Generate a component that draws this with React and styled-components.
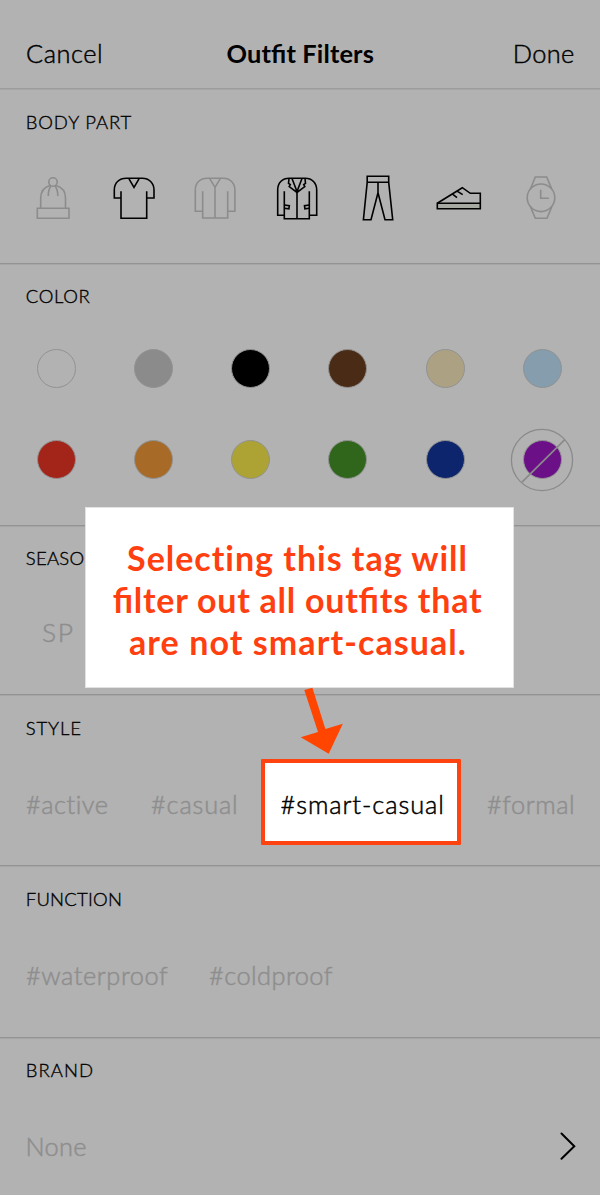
import React from "react";
import styled, { createGlobalStyle } from "styled-components";

const GlobalStyle = createGlobalStyle`
  * { box-sizing: border-box; }
  body {
    margin: 0;
    background: #b2b2b2;
    color: #000;
    font-family: Lato, "Open Sans", sans-serif;
    font-weight: 300;
    font-feature-settings: "liga" 1;
  }
`;

const Screen = styled.main`
  position: relative;
  width: 600px;
  height: 1195px;
  overflow: hidden;
  background: #b2b2b2;
`;

const Header = styled.header`
  display: grid;
  grid-template-columns: 1fr auto 1fr;
  align-items: center;
  height: 88px;
  padding: 18px 25.5px 0 26px;
`;

const HeaderAction = styled.button`
  justify-self: ${(p) => (p.$end ? "end" : "start")};
  padding: 0;
  border: 0;
  background: none;
  color: inherit;
  font: inherit;
  font-size: 25.4px;
  line-height: 32px;
  letter-spacing: ${(p) => (p.$end ? 0.3 : 0.5)}px;
  -webkit-text-stroke: 0.45px currentColor;
`;

const Title = styled.h1`
  margin: 0;
  font-size: 25.4px;
  line-height: 32px;
  font-weight: 700;
  letter-spacing: 0.15px;
`;

const Section = styled.section`
  height: ${(p) => p.$height}px;
  padding-top: ${(p) => p.$top || 20}px;
  border-top: 1px solid ${(p) => p.$line || "#939393"};
  box-shadow: inset 0 1px #a6a6a6;
`;

const Heading = styled.h2`
  margin: 0 0 0 25.7px;
  font-size: 18.5px;
  font-weight: 300;
  line-height: 24px;
  letter-spacing: ${(p) => p.$track}px;
  -webkit-text-stroke: 0.35px currentColor;
`;

const IconRow = styled.div`
  display: grid;
  grid-template-columns: repeat(7, 1fr);
  justify-items: center;
  margin-top: 37px;
  padding: 0 18.8px 0 12px;
`;

const Icon = styled.svg`
  width: 54px;
  height: 54px;
  fill: none;
  stroke: ${(p) => (p.$on ? "#000" : "#8c8c8c")};
  stroke-width: 1.6;
`;

const Swatches = styled.div`
  display: grid;
  grid-template-columns: repeat(6, 1fr);
  grid-auto-rows: 91px;
  place-items: center;
  margin-top: 15px;
  padding: 0 9.4px 0 8.2px;
`;

const SwatchCell = styled.div`
  position: relative;
  display: grid;
  place-items: center;
  width: 64px;
  height: 64px;
`;

const Swatch = styled.span`
  width: 39px;
  height: 39px;
  border: 1px solid #929292;
  border-radius: 50%;
  background: ${(p) => p.$color};
`;

const Excluded = styled.svg`
  position: absolute;
  inset: 0;
  fill: none;
  stroke: #8a8a8a;
`;

const TagRow = styled.div`
  display: grid;
  grid-template-columns: ${(p) => p.$columns};
  align-items: center;
  height: 86px;
  margin-top: ${(p) => p.$gap}px;
  padding: 0 24px 0 ${(p) => p.$left || 26}px;
`;

const Tag = styled.span`
  color: #8e8e8e;
  font-size: ${(p) => p.$size || 25.4}px;
  line-height: 32px;
  white-space: nowrap;
  letter-spacing: ${(p) => p.$track}px;
  margin-left: ${(p) => p.$indent || 0}px;
  padding-top: ${(p) => p.$drop || 0}px;
  font-feature-settings: "liga" 0;
  -webkit-text-stroke: 0.5px currentColor;
`;

const SelectedTag = styled(Tag)`
  display: flex;
  align-items: center;
  width: 200px;
  height: 86px;
  padding-left: 15.5px;
  border: 4px solid #ff4310;
  border-radius: 1px;
  background: #fff;
  color: #000;
`;

const Chevron = styled.svg`
  width: 16px;
  height: 28px;
  fill: none;
  stroke: #000;
  stroke-width: 2;
  stroke-linecap: round;
`;

const Callout = styled.aside`
  position: absolute;
  left: 85px;
  top: 507px;
  width: 429px;
  height: 181px;
  padding-top: 29px;
  border: 1px solid #e2e2e2;
  background: #fff;
  color: #ff3f10;
  text-align: center;
`;

const CalloutLine = styled.div`
  font-size: 34px;
  font-weight: 700;
  line-height: 42px;
  white-space: nowrap;
  letter-spacing: ${(p) => p.$track}px;
  padding-right: ${(p) => p.$shift || 0}px;
  font-feature-settings: "liga" ${(p) => (p.$plain ? 0 : 1)};
`;

const Arrow = styled.svg`
  position: absolute;
  left: 298px;
  top: 686px;
  fill: #ff4500;
`;

const bodyParts = [
  {
    name: "Hat",
    art: (
      <>
        <circle cx="27" cy="11" r="4.2" />
        <path d="M11.3 37.3H43V47.3H11.3ZM14.7 37.3V27C14.7 20 18.5 16 23.8 14.4M39.5 37.3V27C39.5 20 35.5 16 30.2 14.4M25 15C22.8 17.5 22.3 21 22.3 25M29 15C31.2 17.5 31.8 21 31.8 25" />
      </>
    ),
  },
  {
    name: "Top",
    on: true,
    art: <path d="M14 27H7.3V19C7.3 12 12 7.3 19.3 7.3H35.3C42 7.3 47 12 47 19V27H39.7M14 20.3V47.3H39.7V20.3M22 7.8L27 16.5L32 7.8" />,
  },
  {
    name: "Cardigan",
    art: <path d="M14.7 40.3H7.3V19C7.3 12 12 7.3 19.3 7.3H35.3C42 7.3 46.9 12 46.9 19V40.3H39.7M14.7 20.3V47H39.7V20.3M21.7 7.6L27 16.3L32.3 7.6M27 16.3V47" />,
  },
  {
    name: "Blazer",
    on: true,
    art: (
      <>
        <path d="M14.3 44.3H7.7V19C7.7 12 12 7.3 19.3 7.3H35.3C42 7.3 46.7 12 46.7 19V44.3H39.3M14.3 20.3V47.7H39.3V20.3M27 21V47.7" />
        <path d="M19 7.5L18.5 12.3L20.3 13.6L19.2 15.6L27 21.5L34.8 15.6L33.7 13.6L35.5 12.3L35 7.5M22 7.5L27 20.5L32 7.5M14.3 34L19.3 34.7L18.9 37.8L14.3 37.2M39.3 34L34.5 34.7L34.9 37.8L39.3 37.2" />
      </>
    ),
  },
  {
    name: "Pants",
    on: true,
    art: <path d="M16.2 5.3H37.7V11.3H16.2ZM16.2 11.3L12.4 48.7H20L27 21.7L34 48.7H41.7L37.7 11.3M27 11.3V21.7" />,
  },
  {
    name: "Shoes",
    on: true,
    art: (
      <>
        <path fill="#a7aaa3" d="M5.3 32.3H48.3V37.7H5.3Z" />
        <path d="M5.3 32.3L30.3 16.7L38.3 22.3H48.3V32.3M20.3 22.8L25 26.6M24.7 19.8L30.7 23.7" />
      </>
    ),
  },
  {
    name: "Watch",
    art: (
      <>
        <circle cx="27" cy="26.8" r="13.8" />
        <path d="M16.3 18.4L21.3 6H32.7L37.9 18.4M16.3 35.4L21.3 47.3H33L37.9 35.4M26.7 18.7V27.2H34.9" />
      </>
    ),
  },
];

const colors = [
  "#b2b2b2", "#8b8b8b", "#000", "#4a2c16", "#aca283", "#859dad",
  "#a32419", "#a76b27", "#ada335", "#2f661b", "#0c256d", "#6b1087",
];

export default function App() {
  return (
    <Screen>
      <GlobalStyle />
      <Header>
        <HeaderAction>Cancel</HeaderAction>
        <Title>Outfit Filters</Title>
        <HeaderAction $end>Done</HeaderAction>
      </Header>

      <Section $height={175} $top={21} $line="#9c9c9c">
        <Heading $track={0.9}>BODY PART</Heading>
        <IconRow>
          {bodyParts.map((part) => (
            <Icon key={part.name} viewBox="0 0 54 54" $on={part.on} aria-label={part.name}>
              {part.art}
            </Icon>
          ))}
        </IconRow>
      </Section>

      <Section $height={262}>
        <Heading $track={0.7}>COLOR</Heading>
        <Swatches>
          {colors.map((color, i) => (
            <SwatchCell key={color}>
              <Swatch $color={color} />
              {i === 11 && (
                <Excluded width="64" height="64" viewBox="0 0 64 64">
                  <circle cx="32" cy="32" r="30.6" strokeWidth="1.3" />
                  <path d="M12 54.2L54.8 11.6" strokeWidth="1.7" />
                </Excluded>
              )}
            </SwatchCell>
          ))}
        </Swatches>
      </Section>

      <Section $height={169}>
        <Heading $track={0.3}>SEASON</Heading>
        <TagRow $columns="auto" $gap={19} $left={42}>
          <Tag $size={26.4} $track={1.6}>SP</Tag>
        </TagRow>
      </Section>

      <Section $height={171} $top={21}>
        <Heading $track={0.9}>STYLE</Heading>
        <TagRow $columns="125px 110px 200px auto" $gap={19}>
          <Tag $track={0.5} $drop={3}>#active</Tag>
          <Tag $track={0.85} $drop={3}>#casual</Tag>
          <SelectedTag $track={0.93} $drop={3}>#smart-casual</SelectedTag>
          <Tag $track={0.55} $indent={26} $drop={3}>#formal</Tag>
        </TagRow>
      </Section>

      <Section $height={172} $top={21}>
        <Heading $track={0.25}>FUNCTION</Heading>
        <TagRow $columns="183px auto" $gap={20}>
          <Tag $track={0.55} $drop={1}>#waterproof</Tag>
          <Tag $track={0.46} $drop={1}>#coldproof</Tag>
        </TagRow>
      </Section>

      <Section $height={158}>
        <Heading $track={1.1}>BRAND</Heading>
        <TagRow $columns="1fr auto" $gap={21} $left={25.5}>
          <Tag $track={0.3}>None</Tag>
          <Chevron viewBox="0 0 16 28">
            <path d="M1.5 1.5L14.3 14.2L1.5 26.8" />
          </Chevron>
        </TagRow>
      </Section>

      <Callout>
        <CalloutLine $track={0.98} $shift={4} $plain>Selecting this tag will</CalloutLine>
        <CalloutLine $track={0.75} $shift={4}>filter out all outfits that</CalloutLine>
        <CalloutLine $track={1.08} $shift={3}>are not smart-casual.</CalloutLine>
      </Callout>
      <Arrow width="48" height="70" viewBox="298 686 48 70">
        <path d="M304.3 690L312.4 687.8L325.4 728.9L342.8 723.7L328.7 753.8L300.7 737.3L318 732Z" />
      </Arrow>
    </Screen>
  );
}
